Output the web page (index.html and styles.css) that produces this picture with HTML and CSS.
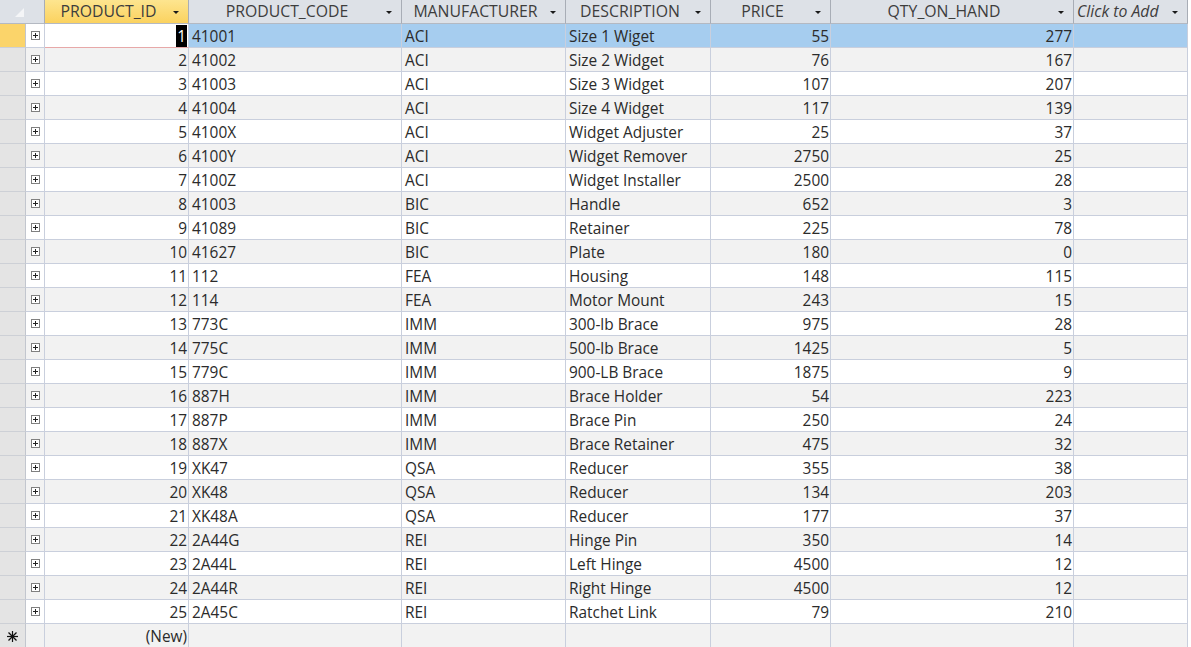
FILE: index.html
```html
<!DOCTYPE html>
<html>
<head>
<meta charset="utf-8">
<link rel="stylesheet" href="styles.css">
</head>
<body>
<div class="sheet">
  <div class="row head">
    <div class="cell corner"><svg width="12" height="9" viewBox="0 0 12 9"><polygon points="12,0 12,9 3,9" fill="#f4f5f7"/></svg></div>
    <div class="cell hcell current"><span class="ht">PRODUCT_ID</span><span class="arrow"></span></div>
    <div class="cell hcell"><span class="ht">PRODUCT_CODE</span><span class="arrow"></span></div>
    <div class="cell hcell"><span class="ht">MANUFACTURER</span><span class="arrow"></span></div>
    <div class="cell hcell"><span class="ht">DESCRIPTION</span><span class="arrow"></span></div>
    <div class="cell hcell"><span class="ht">PRICE</span><span class="arrow"></span></div>
    <div class="cell hcell"><span class="ht">QTY_ON_HAND</span><span class="arrow"></span></div>
    <div class="cell hcell add"><span class="ht">Click to Add</span><span class="arrow"></span></div>
  </div>
  <div id="body"></div>
  <div class="row newrow">
    <div class="cell sel star"><svg width="11" height="11" viewBox="0 0 11 11"><g stroke="#111" stroke-width="1.2"><line x1="5.5" y1="0" x2="5.5" y2="11"/><line x1="0" y1="5.5" x2="11" y2="5.5"/><line x1="1.5" y1="1.5" x2="9.5" y2="9.5"/><line x1="9.5" y1="1.5" x2="1.5" y2="9.5"/></g></svg></div>
    <div class="cell exp"></div>
    <div class="cell num">(New)</div>
    <div class="cell"></div>
    <div class="cell"></div>
    <div class="cell"></div>
    <div class="cell"></div>
    <div class="cell"></div>
    <div class="cell"></div>
  </div>
</div>
<script src="app.js"></script>
</body>
</html>
```

FILE: app.js
```js
const data = [
  [1,"41001","ACI","Size 1 Wiget",55,277],
  [2,"41002","ACI","Size 2 Widget",76,167],
  [3,"41003","ACI","Size 3 Widget",107,207],
  [4,"41004","ACI","Size 4 Widget",117,139],
  [5,"4100X","ACI","Widget Adjuster",25,37],
  [6,"4100Y","ACI","Widget Remover",2750,25],
  [7,"4100Z","ACI","Widget Installer",2500,28],
  [8,"41003","BIC","Handle",652,3],
  [9,"41089","BIC","Retainer",225,78],
  [10,"41627","BIC","Plate",180,0],
  [11,"112","FEA","Housing",148,115],
  [12,"114","FEA","Motor Mount",243,15],
  [13,"773C","IMM","300-lb Brace",975,28],
  [14,"775C","IMM","500-lb Brace",1425,5],
  [15,"779C","IMM","900-LB Brace",1875,9],
  [16,"887H","IMM","Brace Holder",54,223],
  [17,"887P","IMM","Brace Pin",250,24],
  [18,"887X","IMM","Brace Retainer",475,32],
  [19,"XK47","QSA","Reducer",355,38],
  [20,"XK48","QSA","Reducer",134,203],
  [21,"XK48A","QSA","Reducer",177,37],
  [22,"2A44G","REI","Hinge Pin",350,14],
  [23,"2A44L","REI","Left Hinge",4500,12],
  [24,"2A44R","REI","Right Hinge",4500,12],
  [25,"2A45C","REI","Ratchet Link",79,210]
];
const body = document.getElementById("body");
data.forEach((r, i) => {
  const row = document.createElement("div");
  row.className = "row" + (i % 2 ? " alt" : "") + (i === 0 ? " selected" : "");
  const idCell = i === 0
    ? '<div class="cell num focus"><span class="hl">' + r[0] + '</span></div>'
    : '<div class="cell num">' + r[0] + '</div>';
  row.innerHTML =
    '<div class="cell sel"></div>' +
    '<div class="cell exp"><span class="plus"></span></div>' +
    idCell +
    '<div class="cell">' + r[1] + '</div>' +
    '<div class="cell">' + r[2] + '</div>' +
    '<div class="cell">' + r[3] + '</div>' +
    '<div class="cell num">' + r[4] + '</div>' +
    '<div class="cell num">' + r[5] + '</div>' +
    '<div class="cell"></div>';
  body.appendChild(row);
});
```

FILE: styles.css
```css
html, body {
  margin: 0;
  padding: 0;
  background: #ffffff;
}
body {
  font-family: "Open Sans", "Noto Sans", sans-serif;
  font-size: 15.4px;
  color: #2b2b2b;
}
.sheet {
  width: 1191px;
  height: 647px;
  overflow: hidden;
  background: #ffffff;
}
.row {
  display: grid;
  grid-template-columns: 26px 19px 144px 213px 164px 145px 120px 243px 114px;
  width: 1188px;
  height: 24px;
  background: #ffffff;
}
.row.alt { background: #f2f2f2; }
.cell {
  box-sizing: border-box;
  height: 24px;
  border-right: 1px solid #c9cfdd;
  border-bottom: 1px solid #c9cfdd;
  padding: 0 3px;
  line-height: 25px;
  white-space: nowrap;
  overflow: hidden;
}
.cell.num { text-align: right; padding-right: 1px; }
.cell.sel {
  background: #e4e4e4;
  border-right: 1px solid #c2c6ce;
  border-bottom: 1px solid #cdd0d6;
}
.cell.exp {
  display: flex;
  align-items: center;
  justify-content: center;
  padding: 0;
}
.plus {
  width: 9px;
  height: 9px;
  box-sizing: border-box;
  border: 1px solid #808080;
  background: #ffffff;
  position: relative;
}
.plus::before, .plus::after {
  content: "";
  position: absolute;
  background: #222;
}
.plus::before { left: 1px; top: 3px; width: 5px; height: 1px; }
.plus::after { left: 3px; top: 1px; width: 1px; height: 5px; }

.row.selected { background: #a6cdef; }
.row.selected .cell.sel { background: #fbd46a; }
.row.selected .cell.exp { background: #ffffff; }
.cell.focus {
  background: #ffffff;
  border-bottom: 1px solid #e7a8a8;
}
.hl {
  background: #000000;
  color: #ffffff;
  padding: 1px 1px 2px;
}

.row.head {
  grid-template-columns: 45px 144px 213px 164px 145px 120px 243px 114px;
  background: #dde1e7;
}
.head .cell {
  border-right: 1px solid #a8adb6;
  border-bottom: 1px solid #b4b9c2;
  background: #dde1e7;
  line-height: 23px;
}
.corner {
  position: relative;
}
.corner svg {
  position: absolute;
  left: 12px;
  top: 8px;
}
.hcell {
  display: flex;
  align-items: center;
  color: #3d3d3d;
  font-size: 15.8px;
}
.hcell .ht {
  flex: 1;
  text-align: center;
}
.hcell.add .ht {
  text-align: left;
  font-style: italic;
  padding-left: 0;
}
.head .cell.current {
  background: linear-gradient(#fde58f, #fbd25f);
}
.arrow {
  width: 0;
  height: 0;
  border-left: 3px solid transparent;
  border-right: 3px solid transparent;
  border-top: 3px solid #1a1a1a;
  margin: 1px 6px 0 4px;
}
.newrow { background: #f2f2f2; }
.newrow .cell { border-bottom: none; }
.star {
  display: flex;
  align-items: center;
  justify-content: center;
  padding: 0;
}
```
